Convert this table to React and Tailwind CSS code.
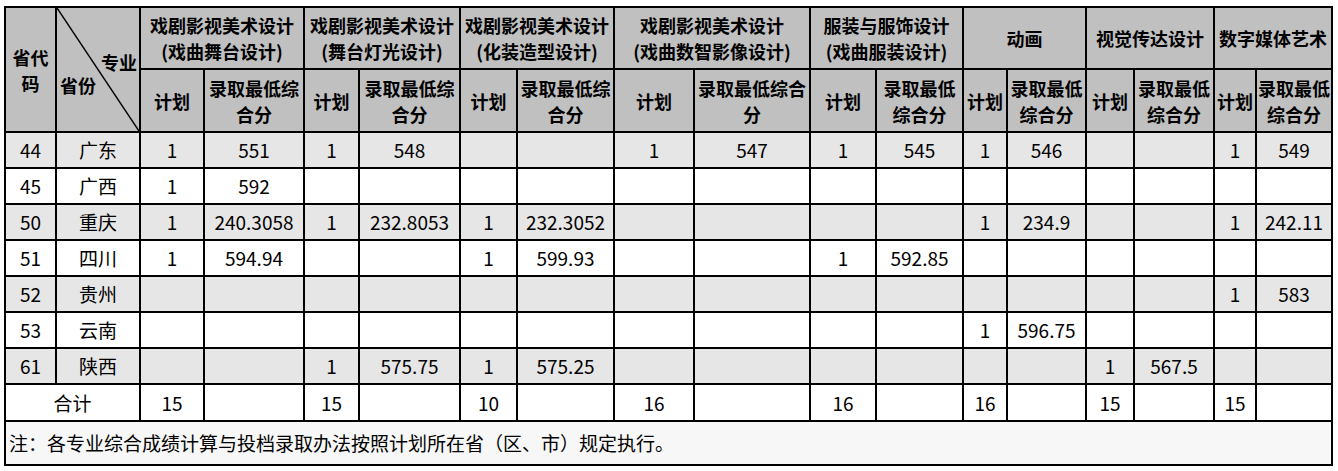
import React from 'react';

const widths = [51, 84, 64, 100, 55, 101, 57, 97, 80, 116, 66, 87, 44, 79, 48, 80, 42, 76];

const majors = [
  { title: ['戏剧影视美术设计', '(戏曲舞台设计)'], score: ['录取最低综', '合分'] },
  { title: ['戏剧影视美术设计', '(舞台灯光设计)'], score: ['录取最低综', '合分'] },
  { title: ['戏剧影视美术设计', '(化装造型设计)'], score: ['录取最低综', '合分'] },
  { title: ['戏剧影视美术设计', '(戏曲数智影像设计)'], score: ['录取最低综合', '分'] },
  { title: ['服装与服饰设计', '(戏曲服装设计)'], score: ['录取最低', '综合分'] },
  { title: ['动画'], score: ['录取最低', '综合分'] },
  { title: ['视觉传达设计'], score: ['录取最低', '综合分'] },
  { title: ['数字媒体艺术'], score: ['录取最低', '综合分'] },
];

const E = ['', ''];
const rows = [
  ['44', '广东', [['1', '551'], ['1', '548'], E, ['1', '547'], ['1', '545'], ['1', '546'], E, ['1', '549']]],
  ['45', '广西', [['1', '592'], E, E, E, E, E, E, E]],
  ['50', '重庆', [['1', '240.3058'], ['1', '232.8053'], ['1', '232.3052'], E, E, ['1', '234.9'], E, ['1', '242.11']]],
  ['51', '四川', [['1', '594.94'], E, ['1', '599.93'], E, ['1', '592.85'], E, E, E]],
  ['52', '贵州', [E, E, E, E, E, E, E, ['1', '583']]],
  ['53', '云南', [E, E, E, E, E, ['1', '596.75'], E, E]],
  ['61', '陕西', [E, ['1', '575.75'], ['1', '575.25'], E, E, E, ['1', '567.5'], E]],
];
const totals = ['15', '15', '10', '16', '16', '16', '15', '15'];

const font = { fontFamily: '"Noto Sans CJK SC", "Microsoft YaHei", sans-serif' };
const th = 'border-2 border-black bg-[#c0c0c0] text-center align-middle font-bold text-[18px] leading-[26px] p-0';
const td = 'border-2 border-black text-center align-middle text-[19px] leading-[24px] p-0 h-[36px]';

export default function App() {
  return (
    <div className="w-[1338px] h-[471px] bg-white pt-[6px] pl-[4px]" style={font}>
      <table className="table-fixed border-collapse text-black w-[1329px]">
        <colgroup>
          {widths.map((w, i) => (
            <col key={i} style={{ width: w }} />
          ))}
        </colgroup>
        <thead>
          <tr className="h-[62px]">
            <th rowSpan={2} className={th}>
              省代<br />码
            </th>
            <th rowSpan={2} className={`${th} relative`}>
              <svg className="absolute inset-0 w-full h-full" preserveAspectRatio="none" viewBox="0 0 100 100">
                <line x1="0" y1="0" x2="100" y2="100" stroke="black" strokeWidth="1.5" vectorEffect="non-scaling-stroke" />
              </svg>
              <div className="relative h-[121px]">
                <span className="absolute right-[2px] top-[40px]">专业</span>
                <span className="absolute left-[3px] top-[63px]">省份</span>
              </div>
            </th>
            {majors.map((m, i) => (
              <th key={i} colSpan={2} className={th}>
                {m.title[0]}
                {m.title[1] && (
                  <>
                    <br />
                    {m.title[1]}
                  </>
                )}
              </th>
            ))}
          </tr>
          <tr className="h-[63px]">
            {majors.map((m, i) => (
              <React.Fragment key={i}>
                <th className={th}>计划</th>
                <th className={th}>
                  {m.score[0]}
                  <br />
                  {m.score[1]}
                </th>
              </React.Fragment>
            ))}
          </tr>
        </thead>
        <tbody>
          {rows.map(([code, prov, cells], r) => (
            <tr key={code} className={r % 2 === 0 ? 'bg-[#e6e6e6]' : 'bg-white'}>
              <td className={td}>{code}</td>
              <td className={td}>{prov}</td>
              {cells.map((c, i) => (
                <React.Fragment key={i}>
                  <td className={td}>{c[0]}</td>
                  <td className={td}>{c[1]}</td>
                </React.Fragment>
              ))}
            </tr>
          ))}
          <tr className="bg-white">
            <td colSpan={2} className={`${td} h-[37px]`}>合计</td>
            {totals.map((t, i) => (
              <React.Fragment key={i}>
                <td className={`${td} h-[37px]`}>{t}</td>
                <td className={`${td} h-[37px]`}></td>
              </React.Fragment>
            ))}
          </tr>
          <tr className="bg-[#f7f7f7]">
            <td colSpan={18} className="border-2 border-black text-left align-middle text-[19px] leading-[24px] h-[44px] pl-[3px]">
              注：各专业综合成绩计算与投档录取办法按照计划所在省（区、市）规定执行。
            </td>
          </tr>
        </tbody>
      </table>
    </div>
  );
}
